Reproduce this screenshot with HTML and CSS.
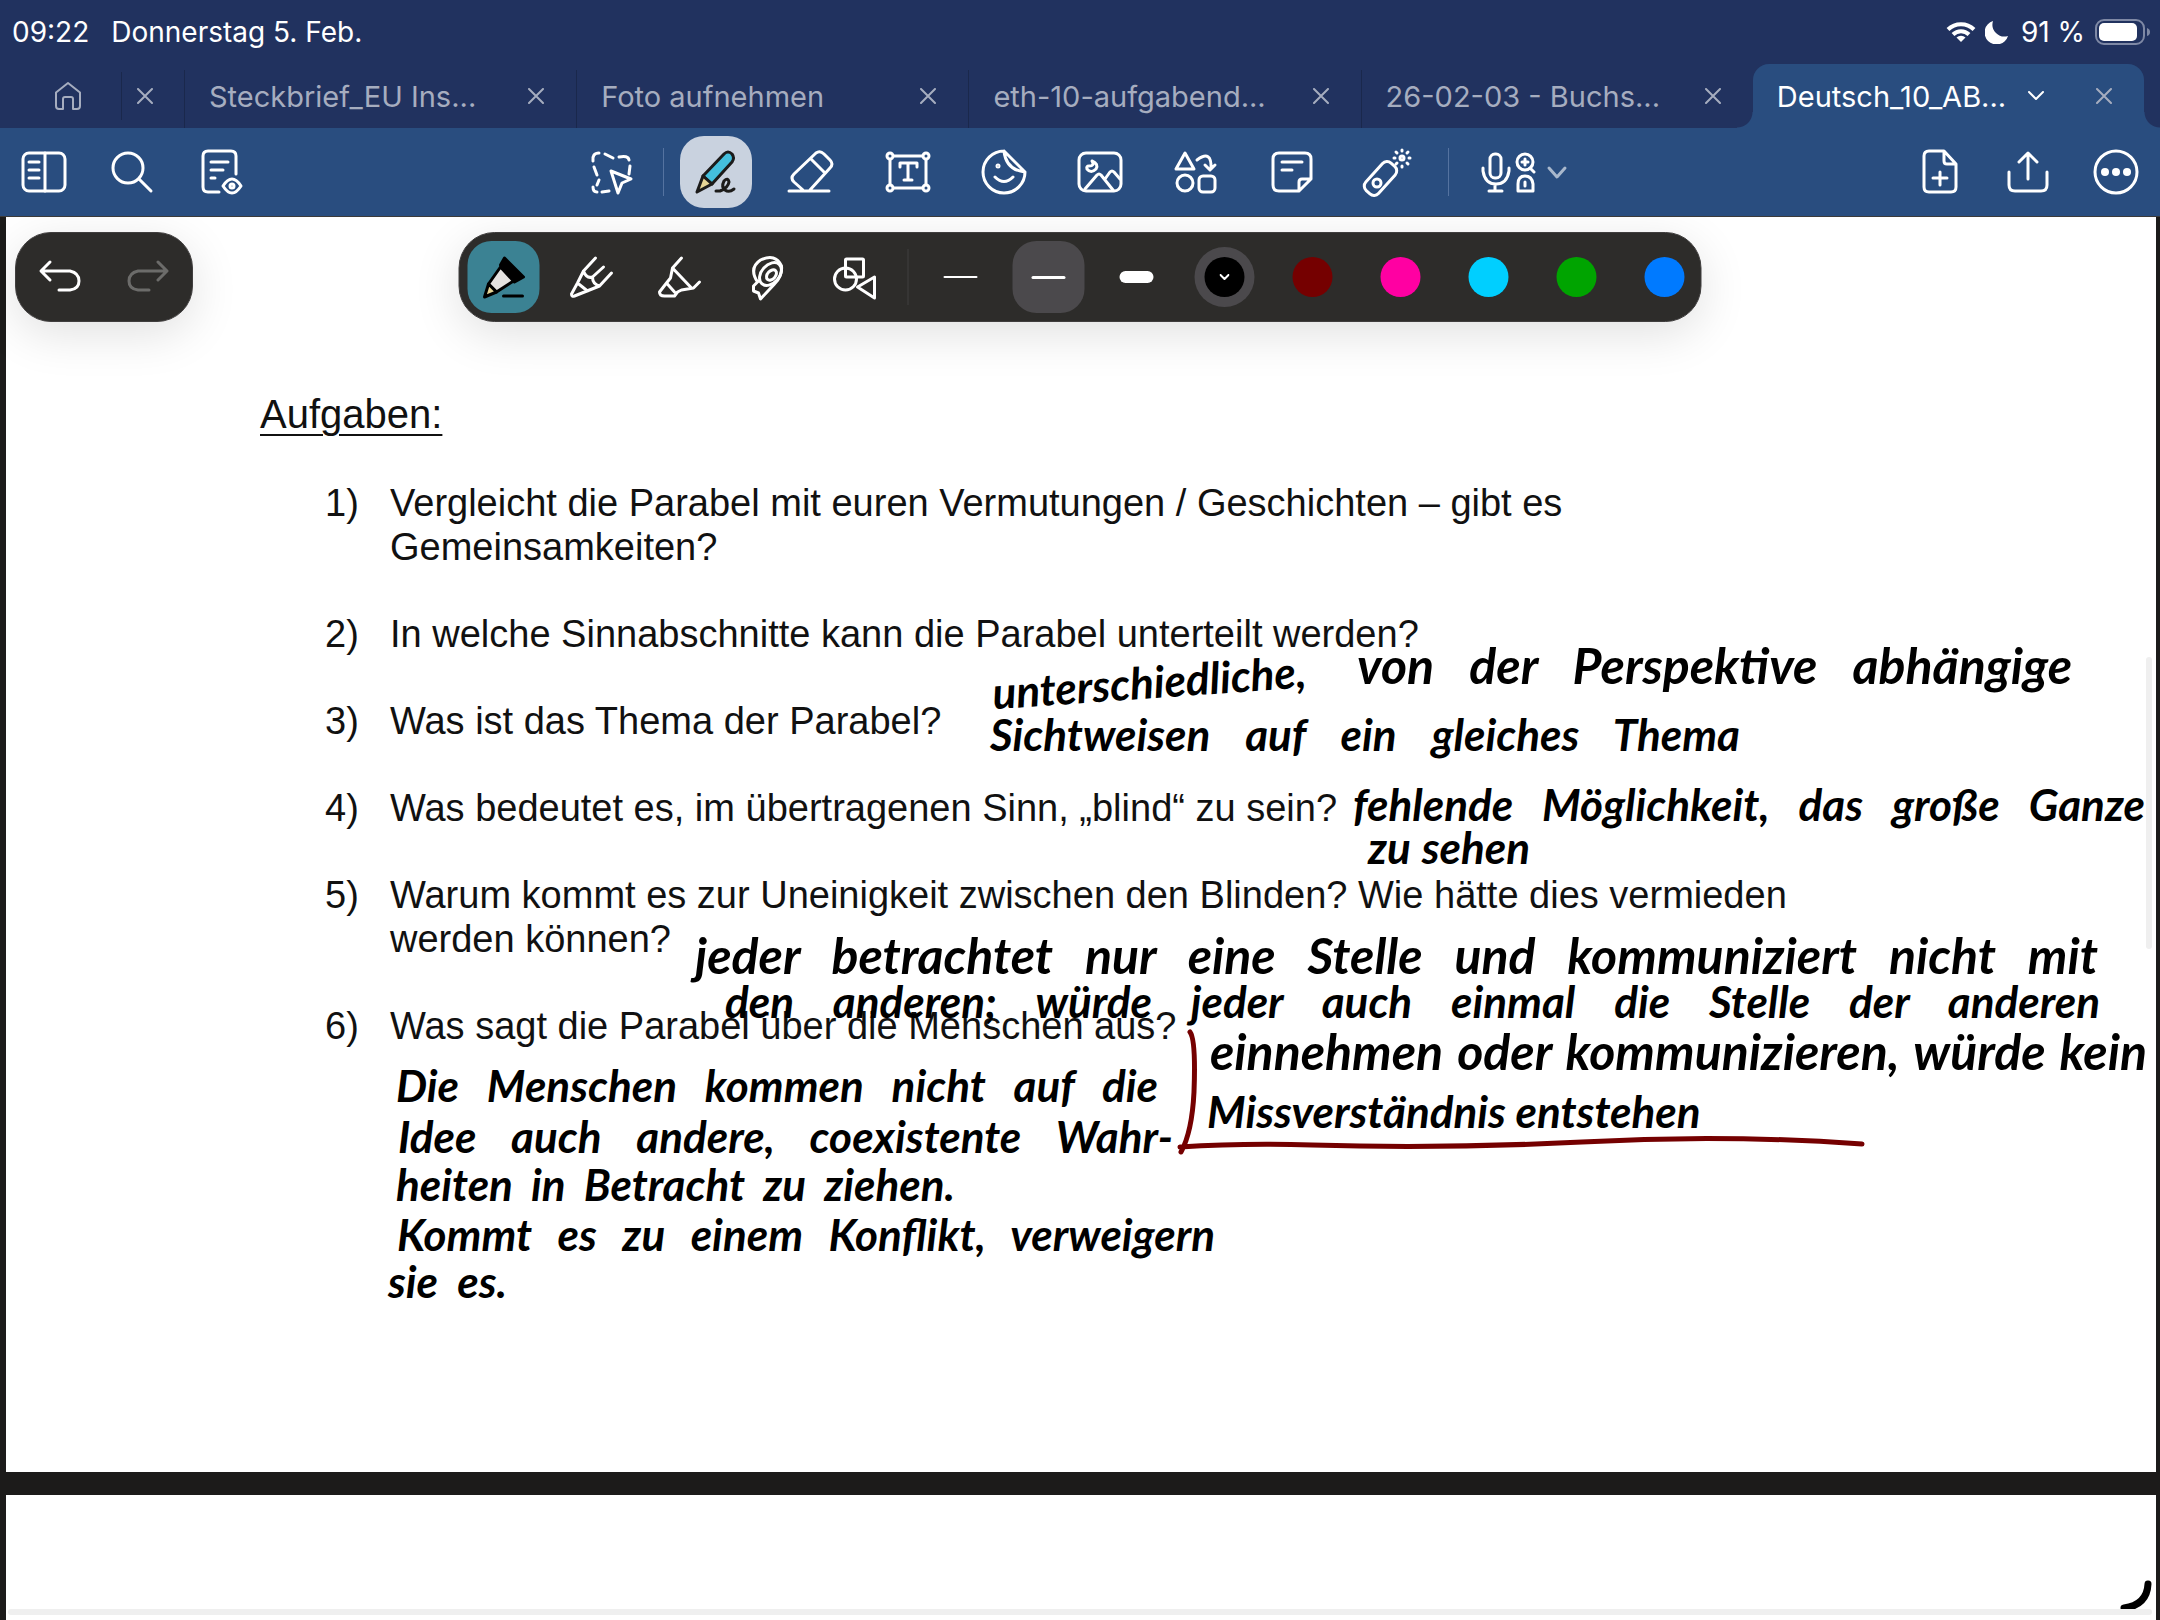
FILE: index.html
```
<!DOCTYPE html>
<html lang="de">
<head>
    <meta charset="UTF-8">
    <meta name="viewport" content="width=device-width, initial-scale=1.0">
    <title>Deutsch_10_AB</title>
    <link rel="stylesheet" href="styles.css">
</head>
<body>
    <!-- Status bar -->
    <div class="status-bar">
        <span>09:22</span>
        <span class="date">Donnerstag 5. Feb.</span>
        <svg class="wifi" width="30" height="22" viewBox="0 0 30 22" fill="none" stroke="#fff" stroke-width="4">
            <path d="M2 8.500A18.500 18.500 0 0 1 28 8.500M7 13.500a11.500 11.500 0 0 1 16 0"/>
            <path d="M15 21l-4.500-4.500a6.500 6.500 0 0 1 9 0z" fill="#fff" stroke="none"/>
        </svg>
        <svg class="moon" width="24" height="24" viewBox="0 0 24 24" fill="#fff"><path d="M8 1a12 12 0 1 0 15 15A12 12 0 0 1 8 1z"/></svg>
        <span>91 %</span>
        <svg class="battery" width="56" height="26" viewBox="0 0 56 26">
            <rect x="1" y="1" width="48" height="24" rx="8" fill="none" stroke="#7f89a5" stroke-width="2"/>
            <rect x="4" y="4" width="38" height="18" rx="5" fill="#fff"/>
            <path d="M52 9q3 1 3 4t-3 4z" fill="#7f89a5"/>
        </svg>
    </div>

    <!-- Document tabs -->
    <nav class="tabs">
        <button class="home" aria-label="Home">
            <svg width="28" height="30" viewBox="0 0 28 30"><path d="M2 11.500L14 2l12 9.500V25q0 3-3 3h-4V18q0-2-2-2h-6q-2 0-2 2v10H5q-3 0-3-3z"/></svg>
        </button>
        <button class="close first" aria-label="Tab schließen"><svg width="16" height="16" viewBox="0 0 16 16"><path d="M1 1l14 14M15 1L1 15"/></svg></button>
        <div class="tab">
            <a href="#">Steckbrief_EU Ins...</a>
            <button class="close" aria-label="Tab schließen"><svg width="16" height="16" viewBox="0 0 16 16"><path d="M1 1l14 14M15 1L1 15"/></svg></button>
        </div>
        <div class="tab">
            <a href="#">Foto aufnehmen</a>
            <button class="close" aria-label="Tab schließen"><svg width="16" height="16" viewBox="0 0 16 16"><path d="M1 1l14 14M15 1L1 15"/></svg></button>
        </div>
        <div class="tab">
            <a href="#">eth-10-aufgabend...</a>
            <button class="close" aria-label="Tab schließen"><svg width="16" height="16" viewBox="0 0 16 16"><path d="M1 1l14 14M15 1L1 15"/></svg></button>
        </div>
        <div class="tab">
            <a href="#">26-02-03 - Buchs...</a>
            <button class="close" aria-label="Tab schließen"><svg width="16" height="16" viewBox="0 0 16 16"><path d="M1 1l14 14M15 1L1 15"/></svg></button>
        </div>
        <div class="tab active">
            <a href="#">Deutsch_10_AB...</a>
            <svg class="caret" width="16" height="10" viewBox="0 0 16 10"><path d="M1 1l7 7 7-7"/></svg>
            <button class="close" aria-label="Tab schließen"><svg width="16" height="16" viewBox="0 0 16 16"><path d="M1 1l14 14M15 1L1 15"/></svg></button>
        </div>
    </nav>

    <!-- Main toolbar -->
    <header class="toolbar">
        <div class="side">
            <button aria-label="Seitenleiste"><svg class="icon" viewBox="0 0 48 48"><rect x="3" y="5" width="42" height="38" rx="6"/><path d="M25 5v38M9 14h10M9 22h10M9 30h10"/></svg></button>
            <button aria-label="Suchen"><svg class="icon" viewBox="0 0 48 48"><circle cx="20" cy="20" r="15"/><path d="M31 31l12 12"/></svg></button>
            <button aria-label="Lesemodus"><svg class="icon" viewBox="0 0 48 48"><path d="M40 26V8q0-5-5-5H12Q7 3 7 8v31q0 5 5 5h11M15 14h17M15 22h12M15 30h4"/><path d="M27 38q9-14 18 0-9 14-18 0z"/><circle cx="36" cy="38" r="2"/></svg></button>
        </div>
        <div class="tools">
            <button aria-label="Lasso"><svg class="icon" viewBox="0 0 48 48"><path d="M6 13q-1-8 6-8M18 6l8 4M32 9q9-2 10 3M43 18l-1 8M7 19l3 8M12 32l-2 5M6 39q0 5 4 5M15 44l7-1"/><path d="M24 23l20 8-9 4-4 10z"/></svg></button>
            <span class="divider"></span>
            <button class="selected" aria-label="Stift"><svg class="icon" viewBox="0 0 48 48">
                <path d="M11 28L32 6q4-4 8 0 3 4 0 8L20 36z" fill="#44bfdd" stroke="#1c1b1a"/>
                <path d="M11 28l9 8L5 44z" fill="#e6d596" stroke="#1c1b1a"/>
                <path d="M24 43h4q8-3 9-9-1-5-5-1-3 6 1 9 4 3 9-1" stroke="#1c1b1a"/></svg></button>
            <button aria-label="Radierer"><svg class="icon" viewBox="0 0 48 48"><path d="M1 43h40M15 42L6 34q-4-4 0-8L28 5q4-3 8 1l6 6q4 4 0 8L22 42M23 11l14 14"/></svg></button>
            <button aria-label="Text"><svg class="icon" viewBox="0 0 48 48"><path d="M10 8h28M10 40h28M6 12v24M42 12v24M16 19v-4h17v4M24 15v17M20 32h8"/><circle cx="6" cy="8" r="3"/><circle cx="42" cy="8" r="3"/><circle cx="6" cy="40" r="3"/><circle cx="42" cy="40" r="3"/></svg></button>
            <button aria-label="Sticker"><svg class="icon" viewBox="0 0 48 48"><path d="M24 3a21 21 0 1 0 21 21zM24 3q2 19 21 21M15 29q9 9 18 0"/><circle cx="18" cy="18" r="1"/></svg></button>
            <button aria-label="Bild"><svg class="icon" viewBox="0 0 48 48"><rect x="3" y="5" width="42" height="38" rx="7"/><path d="M9 41l12-14q2-2 4 0l12 15M29 31l5-7q2-2 4 0l6 7M16 13q3 5-3 5-3 0-2 3 4 5 9 0 3-5-4-8z"/></svg></button>
            <button aria-label="Formen"><svg class="icon" viewBox="0 0 48 48"><path d="M4 21l9-16 9 16zM25 12q15-11 14 9M33 17l5 5 5-5"/><circle cx="13" cy="35" r="8"/><rect x="27" y="28" width="16" height="16" rx="4"/></svg></button>
            <button aria-label="Notiz"><svg class="icon" viewBox="0 0 48 48"><path d="M31 43H11q-6 0-6-6V11q0-6 6-6h26q6 0 6 6v20zM31 43V34q0-3 3-3h9M14 14h20M14 22h10"/></svg></button>
            <button aria-label="Laserpointer"><svg class="icon" viewBox="0 0 48 48"><rect x="-2" y="22" width="37" height="17" rx="6" transform="rotate(-48 16.500 30.500)"/><circle cx="13" cy="35" r="4"/><circle cx="38" cy="10" r="2"/><path d="M38 2v1M38 18v1M30 10h1M45 10h1M32 4l1 1M43 15l1 1M32 16l1-1M43 5l1-1"/></svg></button>
            <span class="divider wide"></span>
            <button class="record" aria-label="Aufnahme und mehr"><svg width="112" height="48" viewBox="0 0 112 48" class="icon"><rect x="17" y="6" width="11" height="24" rx="5"/><path d="M10 20v3q2 13 13 13t13-13v-3M22 36v7M16 43h13"/><circle cx="52" cy="14" r="8"/><path d="M57 20l4 4M49 14h6M52 11v6M45 43v-7q0-8 7-8t8 8v7zM52 34v4"/><path d="M76 20l8 9 8-9" stroke="#a9b8cc"/></svg></button>
        </div>
        <div class="side end">
            <button aria-label="Seite hinzufügen"><svg class="icon" viewBox="0 0 48 48"><path d="M28 3H13Q8 3 8 8v31q0 5 5 5h22q5 0 5-5V16zM28 3v10q0 3 3 3h9M24 24v13M17 30h14"/></svg></button>
            <button aria-label="Teilen"><svg class="icon" viewBox="0 0 48 48"><path d="M5 24v13q0 6 6 6h26q6 0 6-6V24M24 31V6M15 14l9-9 9 9"/></svg></button>
            <button aria-label="Mehr"><svg class="icon" viewBox="0 0 48 48"><circle cx="24" cy="24" r="21"/><g fill="#fff" stroke="none"><circle cx="13" cy="24" r="4"/><circle cx="24" cy="24" r="4"/><circle cx="35" cy="24" r="4"/></g></svg></button>
        </div>
    </header>

    <main class="workspace">
        <!-- Floating palettes -->
        <div class="palette history">
            <button aria-label="Rückgängig"><svg class="icon" viewBox="0 0 48 48"><path d="M14 9L5 18l9 9M6 18h28q9 2 9 10t-9 9H23"/></svg></button>
            <button aria-label="Wiederholen" disabled><svg class="icon" viewBox="0 0 48 48"><path d="M34 9l9 9-9 9M42 18H14q-9 2-9 10t9 9h11"/></svg></button>
        </div>
        <div class="palette pens">
            <button class="teal" aria-label="Füller"><svg class="icon" viewBox="0 0 48 48">
                <path d="M25 5l19 19-9 5L21 12z" fill="#000" stroke="#000"/>
                <path d="M21 14l13 14-17 11-8-8z" fill="#e4e2e0" stroke="#000"/>
                <path d="M9 31l8 8-12 5z" fill="#e6d596" stroke="#000"/>
                <path d="M24 43h19" stroke="#000"/></svg></button>
            <button aria-label="Bleistift"><svg class="icon" viewBox="0 0 48 48"><path d="M28 5L16 18 10 30 4 41q0 3 3 2l25-10 12-13M36 14L25 24q-6 2-9-6M25 24q0 7 7 9M10 30l10 8"/></svg></button>
            <button aria-label="Marker"><svg class="icon" viewBox="0 0 48 48"><path d="M26 5l-9 10-2 10-4 5-7 9q0 4 5 4h10l3-4 4-2 12-2 6-6M17 15l19 20M11 30l8 9"/></svg></button>
            <button aria-label="Klebeband"><svg class="icon" viewBox="0 0 48 48"><path d="M14 29Q5 15 17 7q15-7 21 6 1 10-7 18L17 46l-2-6-5-2v-5l5-5"/><ellipse cx="27" cy="21" rx="13" ry="9" transform="rotate(-48 27 21)"/><ellipse cx="28" cy="22" rx="6" ry="4" transform="rotate(-48 28 22)"/></svg></button>
            <button aria-label="Formen"><svg class="icon" viewBox="0 0 48 48"><rect x="14" y="6" width="18" height="18" rx="1"/><circle cx="14" cy="26" r="11"/><path d="M26 34l17-10v21z"/></svg></button>
            <span class="divider"></span>
            <button aria-label="Dünn"><span class="stroke thin"></span></button>
            <button class="grey" aria-label="Mittel"><span class="stroke"></span></button>
            <button aria-label="Dick"><span class="stroke thick"></span></button>
            <button aria-label="Schwarz"><span class="swatch black"><svg width="10" height="6" viewBox="0 0 10 6"><path d="M1 1l4 4 4-4"/></svg></span></button>
            <button aria-label="Dunkelrot"><span class="swatch maroon"></span></button>
            <button aria-label="Pink"><span class="swatch pink"></span></button>
            <button aria-label="Cyan"><span class="swatch cyan"></span></button>
            <button aria-label="Grün"><span class="swatch green"></span></button>
            <button aria-label="Blau"><span class="swatch blue"></span></button>
        </div>

        <article class="page">
            <h1>Aufgaben:</h1>
            <ol>
                <li>Vergleicht die Parabel mit euren Vermutungen / Geschichten – gibt es Gemeinsamkeiten?</li>
                <li>In welche Sinnabschnitte kann die Parabel unterteilt werden?</li>
                <li>Was ist das Thema der Parabel?</li>
                <li>Was bedeutet es, im übertragenen Sinn, „blind“ zu sein?</li>
                <li>Warum kommt es zur Uneinigkeit zwischen den Blinden? Wie hätte dies vermieden werden können?</li>
                <li>Was sagt die Parabel über die Menschen aus?</li>
            </ol>

            <!-- Handwritten notes on top of the sheet -->
            <div class="ink">
                <p class="a3-1">unterschiedliche,</p>
                <p class="a3-2 large">von der Perspektive abhängige</p>
                <p class="a3-3">Sichtweisen auf ein gleiches Thema</p>
                <p class="a4-1">fehlende Möglichkeit, das große Ganze</p>
                <p class="a4-2">zu sehen</p>
                <p class="a5-1 large">jeder betrachtet nur eine Stelle und kommuniziert nicht mit</p>
                <p class="a5-2">den anderen; würde jeder auch einmal die Stelle der anderen</p>
                <p class="a5-3 large">einnehmen oder kommunizieren, würde kein</p>
                <p class="a5-4">Missverständnis entstehen</p>
                <p class="a6-1">Die Menschen kommen nicht auf die</p>
                <p class="a6-2">Idee auch andere, coexistente Wahr-</p>
                <p class="a6-3">heiten in Betracht zu ziehen.</p>
                <p class="a6-4">Kommt es zu einem Konflikt, verweigern</p>
                <p class="a6-5">sie es.</p>
                <svg class="red-line" width="690" height="130" viewBox="0 0 690 130"><path d="M13 5q6 8 4 60-2 40-13 60M3 120q62-4 132-2 130 4 270-3 140-8 280 2"/></svg>
            </div>
        </article>

        <article class="page next">
            <svg class="loop" width="32" height="32" viewBox="0 0 32 32"><path d="M28 4q-1 21-24 24"/></svg>
        </article>

        <div class="scroll-y"></div>
        <div class="scroll-x"></div>
    </main>
</body>
</html>
```
FILE: styles.css
```
* {
    box-sizing: border-box;
}

body {
    margin: 0;
    height: 100vh;
    display: flex;
    flex-direction: column;
    overflow: hidden;
    background-color: #21325f;
    color: #fff;
    font-family: Inter, "Liberation Sans", sans-serif;
    font-size: 28px;
}

button {
    display: flex;
    align-items: center;
    justify-content: center;
    padding: 0;
    border: 0;
    background: none;
    color: inherit;
    font: inherit;
}

svg {
    fill: none;
    stroke-linecap: round;
    stroke-linejoin: round;
}

/* Status bar */
.status-bar {
    display: flex;
    align-items: center;
    height: 64px;
    padding: 0 9px 0 12px;
}

.date {
    margin-left: 22px;
    margin-right: auto;
}

.wifi {
    stroke-linecap: butt;
}

.moon {
    fill: #fff;
    margin: 0 12px 0 9px;
}

.battery {
    margin-left: 10px;
}

/* Tabs */
.tabs {
    display: flex;
    align-items: center;
    height: 64px;
    padding-right: 16px;
    color: #a6adbf;
    font-size: 29px;
}

.tabs svg {
    stroke: #a6adbf;
    stroke-width: 2;
}

.home {
    width: 122px;
    height: 48px;
    padding-left: 14px;
    border-right: 1px solid #1a284c;
}

.close {
    width: 32px;
    height: 32px;
}

.close.first {
    width: 62px;
    padding-right: 16px;
}

.tab {
    flex: 1;
    display: flex;
    align-items: center;
    align-self: stretch;
    min-width: 0;
    margin-top: 6px;
    padding: 0 24px 6px;
    border-left: 1px solid #1a284c;
}

.tab a {
    color: inherit;
    text-decoration: none;
    white-space: nowrap;
}

.tab .close {
    margin-left: auto;
}

.tab.active {
    position: relative;
    margin-top: 0;
    padding-bottom: 0;
    border-left: 0;
    border-radius: 16px 16px 0 0;
    background-color: #294d7f;
    color: #fff;
}

/* Inverted corners at the foot of the active tab */
.tab.active::before,
.tab.active::after {
    content: "";
    position: absolute;
    bottom: 0;
    width: 16px;
    height: 16px;
}

.tab.active::before {
    left: -16px;
    background: radial-gradient(circle at 0 0, #21325f 15px, #294d7f 16px);
}

.tab.active::after {
    right: -16px;
    background: radial-gradient(circle at 100% 0, #21325f 15px, #294d7f 16px);
}

.tab .caret {
    margin-left: 22px;
    stroke: #fff;
}

/* Toolbar */
.toolbar {
    display: flex;
    align-items: center;
    height: 89px;
    border-bottom: 1px solid #3c3b3a;
    background-color: #294d7f;
}

.icon {
    width: 48px;
    height: 48px;
    overflow: visible;
    stroke: #fff;
    stroke-width: 3;
}

.side {
    flex: 1;
    display: flex;
}

.side button {
    width: 88px;
    height: 88px;
}

.end {
    justify-content: flex-end;
}

.tools {
    display: flex;
    align-items: center;
    gap: 24px;
}

.tools button {
    width: 72px;
    height: 72px;
    border-radius: 24px;
}

.tools .selected {
    background-color: #c9d2df;
}

.tools .record,
.record .icon {
    width: 112px;
}

.divider {
    width: 1px;
    height: 48px;
    margin: 0 -8px;
    background-color: #5573a0;
}

.divider.wide {
    margin: 0;
}

/* Canvas */
.workspace {
    position: relative;
    flex: 1;
    display: flex;
    flex-direction: column;
    gap: 23px;
    padding: 0 4px 0 6px;
    overflow: hidden;
    background-color: #1c1b1a;
}

.palette {
    position: absolute;
    z-index: 2;
    top: 15px;
    display: flex;
    align-items: center;
    gap: 16px;
    padding: 8px;
    border: 1px solid #403e3e;
    border-radius: 36px;
    background-color: #2d2c2a;
    box-shadow: 0 12px 48px rgba(0, 0, 0, 0.12);
}

.palette button {
    width: 72px;
    height: 72px;
    border-radius: 24px;
}

.palette button:disabled {
    opacity: 0.3;
}

.palette .divider {
    height: 56px;
    margin: 0;
    background-color: #403e3e;
}

.history {
    left: 15px;
}

.pens {
    left: 50%;
    transform: translateX(-50%);
    padding: 8px 0 8px 8px;
}

.palette .teal {
    background-color: #3b8293;
}

.palette .grey {
    background-color: #4b494c;
}

.stroke {
    width: 34px;
    height: 3px;
    border-radius: 6px;
    background-color: #fff;
}

.stroke.thin {
    height: 2px;
}

.stroke.thick {
    height: 12px;
}

.swatch {
    display: flex;
    align-items: center;
    justify-content: center;
    width: 40px;
    height: 40px;
    border-radius: 50%;
}

.swatch svg {
    stroke: #fff;
    stroke-width: 2;
}

.black {
    background-color: #000;
    box-shadow: 0 0 0 10px #4b494c;
}

.maroon {
    background-color: #750000;
}

.pink {
    background-color: #ff00a2;
}

.cyan {
    background-color: #00cfff;
}

.green {
    background-color: #00a400;
}

.blue {
    background-color: #007aff;
}

/* Worksheet */
.page {
    position: relative;
    padding: 175px 254px 424px;
    background-color: #fff;
    color: #111;
    font-family: "Liberation Sans", Arial, sans-serif;
    font-size: 38px;
    line-height: 44px;
}

.page.next {
    flex: 1;
    padding: 0;
}

.page h1 {
    margin: 0 0 45px;
    font-size: 40px;
    font-weight: normal;
    text-decoration: underline;
    text-decoration-thickness: 2px;
    text-underline-offset: 6px;
}

.page ol {
    display: flex;
    flex-direction: column;
    gap: 43px;
    max-width: 1590px;
    margin: 0;
    padding: 0 0 0 65px;
    list-style: none;
    counter-reset: task;
}

.page li {
    display: grid;
    grid-template-columns: 65px 1fr;
    counter-increment: task;
}

.page li::before {
    content: counter(task) ")";
}

/* Handwriting */
.ink p {
    position: absolute;
    margin: 0;
    color: #000;
    font-family: Lato, "Open Sans", sans-serif;
    font-size: 44px;
    font-style: italic;
    font-weight: bold;
    line-height: 44px;
    white-space: nowrap;
    text-align-last: justify;
}

.ink .large {
    font-size: 50px;
}

.ink .a3-1 { left: 986px; top: 442px; width: 325px; transform: rotate(-4deg); }
.ink .a3-2 { left: 1351px; top: 426px; width: 715px; }
.ink .a3-3 { left: 984px; top: 495px; width: 750px; }
.ink .a4-1 { left: 1347px; top: 565px; width: 792px; }
.ink .a4-2 { left: 1362px; top: 608px; width: 162px; }
.ink .a5-1 { left: 689px; top: 716px; width: 1403px; }
.ink .a5-2 { left: 719px; top: 762px; width: 1375px; }
.ink .a5-3 { left: 1204px; top: 812px; width: 937px; }
.ink .a5-4 { left: 1201px; top: 872px; width: 493px; }
.ink .a6-1 { left: 390px; top: 846px; width: 762px; }
.ink .a6-2 { left: 392px; top: 897px; width: 775px; }
.ink .a6-3 { left: 390px; top: 945px; width: 559px; }
.ink .a6-4 { left: 391px; top: 995px; width: 818px; }
.ink .a6-5 { left: 382px; top: 1042px; width: 119px; }

.red-line {
    position: absolute;
    left: 1171px;
    top: 810px;
    stroke: #750000;
    stroke-width: 5;
}

.loop {
    position: absolute;
    right: 4px;
    bottom: 8px;
    stroke: #000;
    stroke-width: 7;
}

/* Scroll indicators */
.scroll-y {
    position: absolute;
    right: 8px;
    top: 440px;
    width: 6px;
    height: 292px;
    border-radius: 3px;
    background-color: #efefef;
}

.scroll-x {
    position: absolute;
    left: 8px;
    right: 8px;
    bottom: 5px;
    height: 6px;
    border-radius: 3px;
    background-color: #efefef;
}
```
